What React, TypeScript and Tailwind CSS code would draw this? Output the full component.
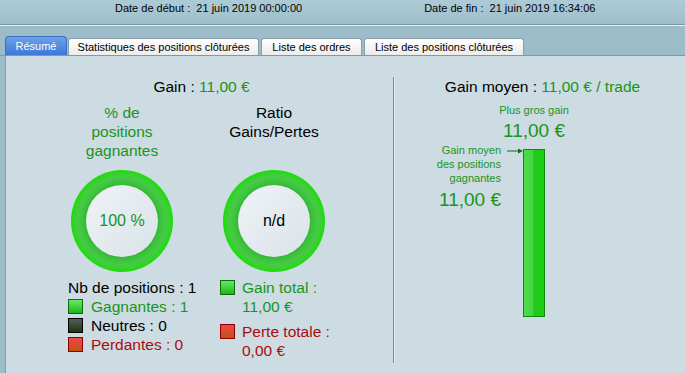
import React from "react";

const green = "text-[#18951a]";
const red = "text-[#a80e0e]";

function Swatch({ kind, className = "" }: { kind: "win" | "flat" | "loss"; className?: string }) {
    const styles = {
        win: "border-[#0b6e0b] bg-linear-to-b from-[#66e866] to-[#12b812]",
        flat: "border-[#000000] bg-linear-to-b from-[#5a5a5a] to-[#173a08]",
        loss: "border-[#8e0000] bg-linear-to-b from-[#ee4646] to-[#c4500c]",
    };
    return <span className={`block w-[15px] h-[15px] shrink-0 border ${styles[kind]} ${className}`} />;
}

function Gauge({ children }: { children: React.ReactNode }) {
    return (
        <div className="mx-auto w-[102px] h-[102px] rounded-full flex items-center justify-center bg-[radial-gradient(circle_closest-side,#33b533_0%,#33b533_70%,#3bc03b_75%,#45ca45_85%,#3ccf34_92%,#24da14_97%,#1cdb0c_100%)]">
            <div className="w-[72px] h-[72px] rounded-full flex items-center justify-center bg-linear-to-br from-[#eff3f6] to-[#d9e3e9] text-[16px]">
                {children}
            </div>
        </div>
    );
}

export default function App() {
    const tabs = [
        { label: "Statistiques des positions clôturées", w: "w-[191px]" },
        { label: "Liste des ordres", w: "w-[101px]" },
        { label: "Liste des positions clôturées", w: "w-[160px]" },
    ];

    return (
        <div className="min-h-screen flex flex-col bg-[#9bbcc8] font-['Liberation_Sans',Arial,sans-serif] text-black">
            {/* Dates header */}
            <div className="h-[24px] flex items-start pt-[1px] pl-[115px] text-[11px] leading-[14px] bg-linear-to-b from-[#adcbd7] to-[#9fbfcb]">
                <span>Date de début :&nbsp; 21 juin 2019 00:00:00</span>
                <span className="ml-[122px]">Date de fin :&nbsp; 21 juin 2019 16:34:06</span>
            </div>
            <div className="h-px bg-[#7d97a3]" />
            <div className="h-px bg-[#e4edf1]" />

            {/* Tabs */}
            <div className="h-[30px] flex items-end gap-[2px] pl-[5px] border-b border-[#7f9aa6]">
                <div className="w-[62px] -mr-px h-[19px] flex items-center justify-center rounded-t-[4px] border border-b-0 border-[#3b6fc2] bg-linear-to-b from-[#6ea1e8] to-[#3c78d8] text-white text-[11px]">
                    Résumé
                </div>
                {tabs.map((t) => (
                    <div
                        key={t.label}
                        className={`${t.w} h-[17px] flex items-center justify-center rounded-t-[3px] border border-b-0 border-[#8b9ea8] bg-linear-to-b from-white to-[#ececec] text-[11px] whitespace-nowrap`}
                    >
                        {t.label}
                    </div>
                ))}
            </div>

            {/* Panel */}
            <div className="flex-1 ml-[5px] flex border-l border-[#86a0ac] bg-[#cddbe2]">
                {/* Left: summary */}
                <section className="w-[387px] pt-[21px] text-[15.5px]">
                    <div className="text-center pl-[4px] leading-[19px]">
                        Gain : <span className={green}>11,00 €</span>
                    </div>

                    <div className="flex pl-[62px] gap-[44px] mt-[7px]">
                        <div className="w-[108px]">
                            <div className={`h-[57px] text-center leading-[19px] ${green}`}>
                                % de<br />positions<br />gagnantes
                            </div>
                            <div className="mt-[10px]">
                                <Gauge><span className="text-[#14932a]">100 %</span></Gauge>
                            </div>
                            <div className="mt-[5.5px] leading-[19px] whitespace-nowrap">
                                <div>Nb de positions : 1</div>
                                <div className="flex items-center">
                                    <Swatch kind="win" className="mr-[8px]" />
                                    <span className={green}>Gagnantes : 1</span>
                                </div>
                                <div className="flex items-center">
                                    <Swatch kind="flat" className="mr-[8px]" />
                                    <span>Neutres : 0</span>
                                </div>
                                <div className="flex items-center">
                                    <Swatch kind="loss" className="mr-[8px]" />
                                    <span className={red}>Perdantes : 0</span>
                                </div>
                            </div>
                        </div>

                        <div className="w-[108px]">
                            <div className="h-[57px] text-center leading-[19px]">
                                Ratio<br />Gains/Pertes
                            </div>
                            <div className="mt-[10px]">
                                <Gauge>n/d</Gauge>
                            </div>
                            <div className="mt-[5.5px] leading-[19px] whitespace-nowrap">
                                <div className="flex items-start">
                                    <Swatch kind="win" className="mt-[2px] mr-[7px]" />
                                    <span className={green}>Gain total :<br />11,00 €</span>
                                </div>
                                <div className="flex items-start mt-[6px]">
                                    <Swatch kind="loss" className="mt-[2px] mr-[7px]" />
                                    <span className={red}>Perte totale :<br />0,00 €</span>
                                </div>
                            </div>
                        </div>
                    </div>
                </section>

                {/* Divider */}
                <div className="self-start mt-[21px] h-[286px] w-[2px] border-l border-r border-l-[#6f8a98] border-r-[#e3ecf0]" />

                {/* Right: average gain */}
                <section className="flex-1 pt-[21px]">
                    <div className="text-center pl-[5px] text-[15.5px] leading-[19px]">
                        Gain moyen : <span className={green}>11,00 € / trade</span>
                    </div>

                    <div className={`flex pl-[6px] mt-[8px] ${green}`}>
                        <div className="w-[100px] flex flex-col items-end text-right pt-[38.5px]">
                            <div className="text-[11px] leading-[14px] whitespace-nowrap">
                                Gain moyen<br />des positions<br />gagnantes
                            </div>
                            <div className="mt-[4px] text-[19px] leading-[22px] whitespace-nowrap">11,00 €</div>
                        </div>
                        <div className="w-[66px] flex flex-col items-center">
                            <div className="text-[11px] leading-[13px] whitespace-nowrap">Plus gros gain</div>
                            <div className="mt-[2.5px] text-[19px] leading-[22px] whitespace-nowrap">11,00 €</div>
                            <div className="relative mt-[7px] w-[22px] h-[168px] border border-[#0e8a0e] bg-[linear-gradient(to_right,#4cdc4c_0%,#42d742_42%,#2cbf2c_50%,#1fcb16_58%,#1bd012_100%)]">
                                <svg className="absolute right-full top-[-3px]" width="17" height="8" viewBox="0 0 17 8">
                                    <line x1="0" y1="4" x2="13" y2="4" stroke="#0f6e0f" strokeWidth="1" />
                                    <path d="M11 1.5 L16 4 L11 6.5 Z" fill="#0f6e0f" />
                                </svg>
                            </div>
                        </div>
                    </div>
                </section>
            </div>
        </div>
    );
}
